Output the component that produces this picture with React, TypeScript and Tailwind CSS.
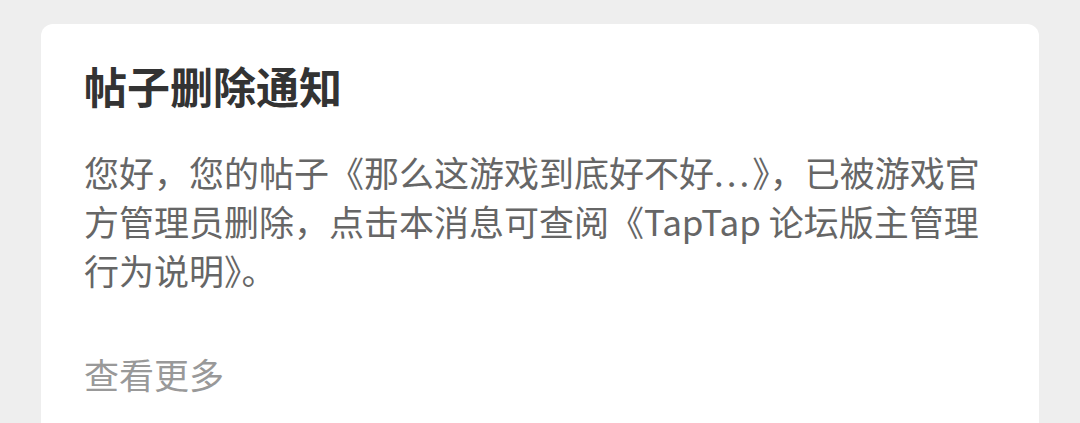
import React from "react";

const font = { fontFamily: '"Noto Sans CJK SC", "Noto Sans", sans-serif' };

export default function App() {
  return (
    <div className="w-[1080px] h-[423px] overflow-hidden bg-[#eeeeee] pt-[24px] px-[41px]" style={font}>
      <div className="bg-white rounded-t-[12px] px-[43px] pt-[40px] pb-[40px] h-[420px]">
        <h1 className="text-[43px] leading-[43px] font-bold text-[#333333]">帖子删除通知</h1>
        <div className="mt-[40px] text-[35px] leading-[49px] text-[#666666]">
          <div className="whitespace-nowrap">
            您好，您的帖子《那么这游戏到底好不好<span className="tracking-[3px]">...</span>》，已被游戏官
          </div>
          <div className="whitespace-nowrap">方管理员删除，点击本消息可查阅《TapTap 论坛版主管理</div>
          <div className="whitespace-nowrap">行为说明》。</div>
        </div>
        <div className="mt-[60px] text-[35px] leading-[40px] text-[#999999]">查看更多</div>
      </div>
    </div>
  );
}
